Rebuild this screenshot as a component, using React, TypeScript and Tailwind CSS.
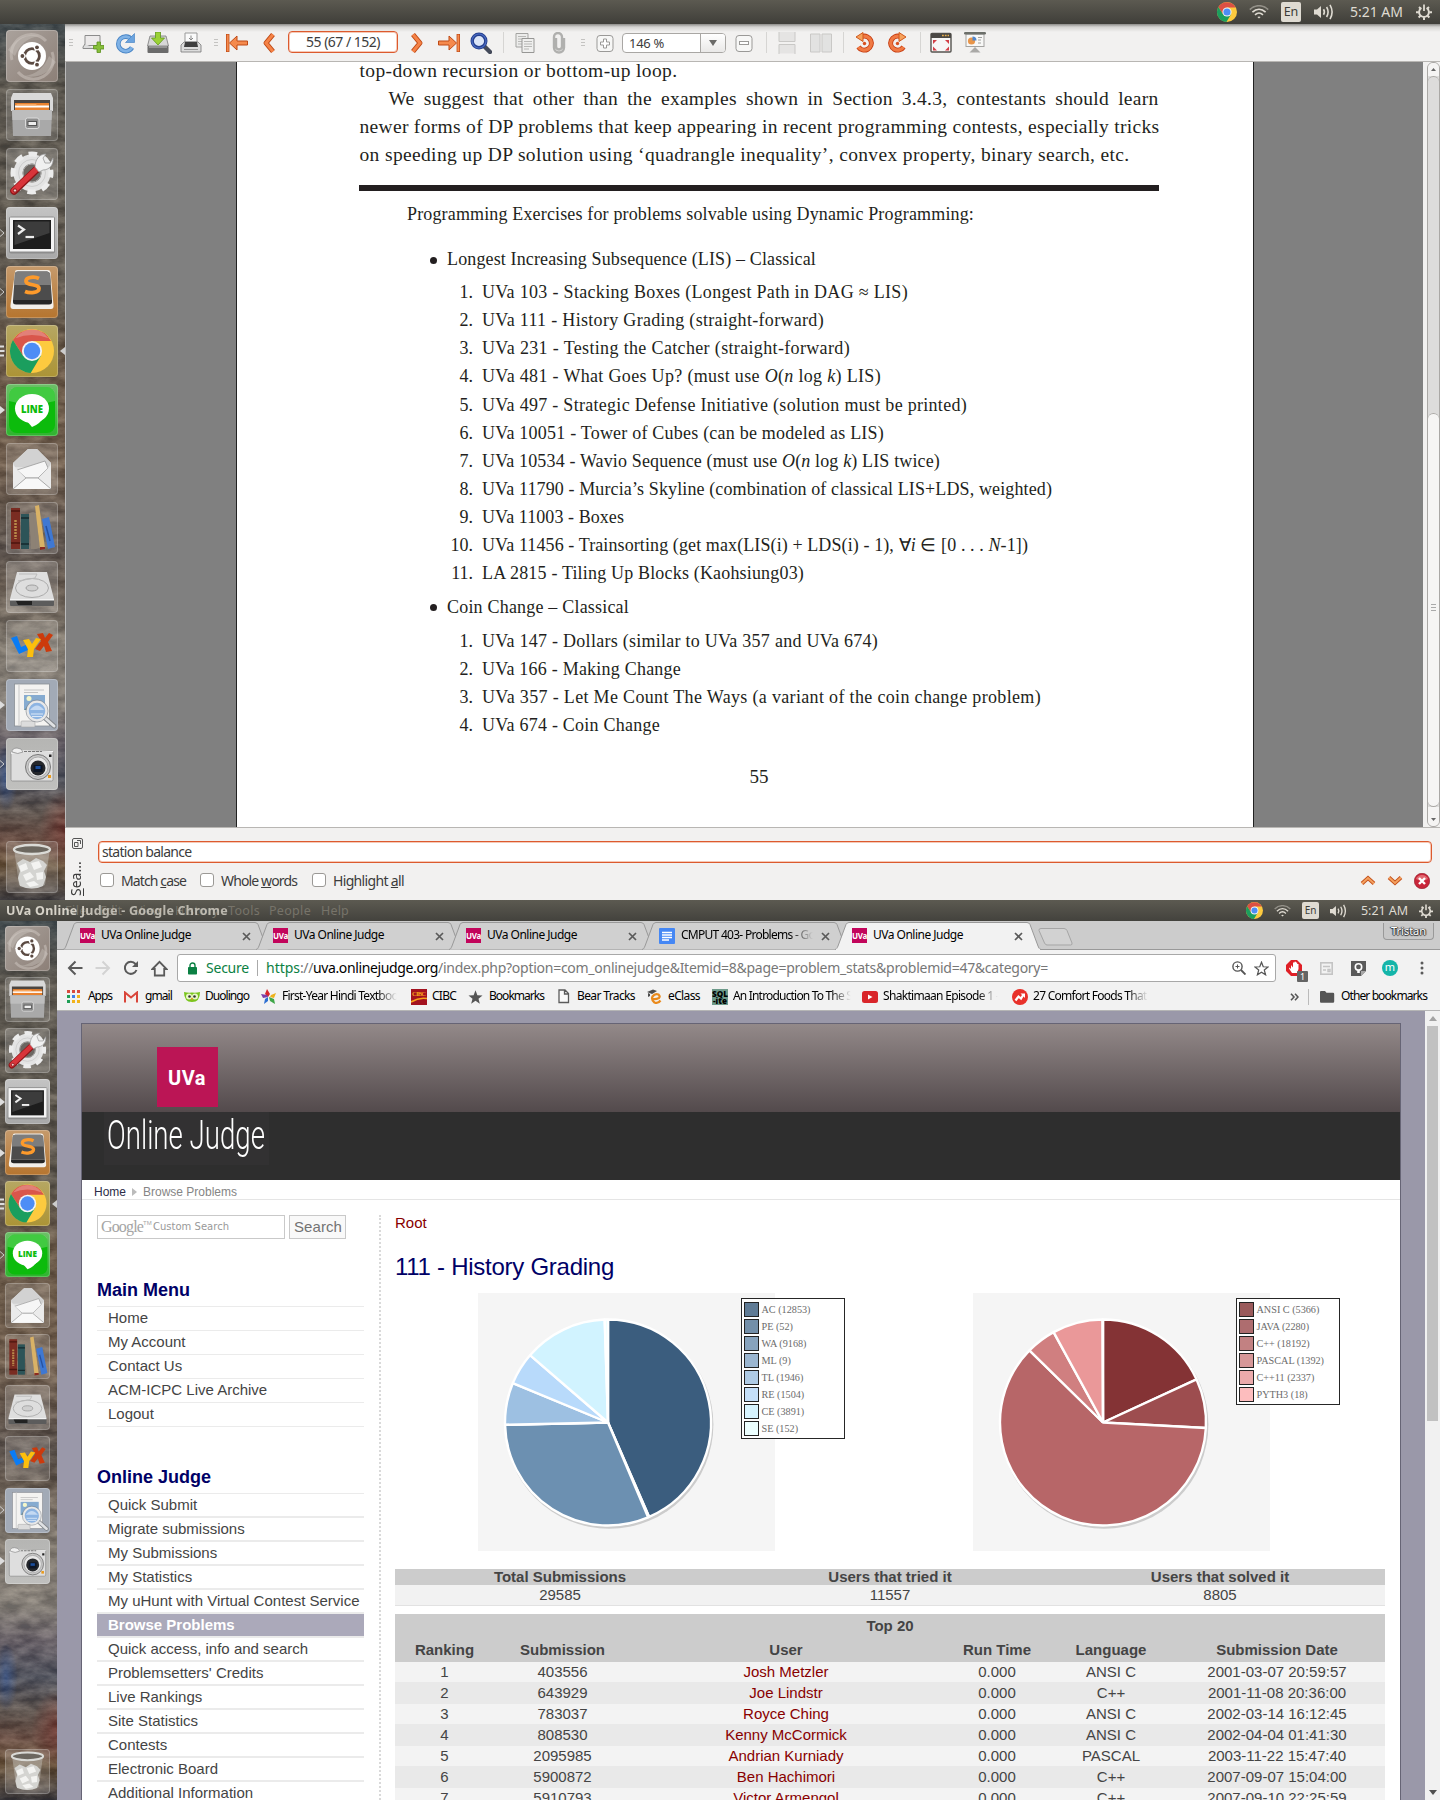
import React, { useLayoutEffect, useRef, useState } from "react";

type Kids = { children?: React.ReactNode };

/* Text that is tracked (or squeezed) to fill a given width. */
function Fit({ w, children, className = "", squeeze = false }: Kids & { w: number; className?: string; squeeze?: boolean }) {
  const ref = useRef<HTMLSpanElement>(null);
  const [v, setV] = useState<number | null>(null);
  useLayoutEffect(() => {
    const el = ref.current;
    if (!el || v !== null) return;
    const nat = el.getBoundingClientRect().width;
    const n = (el.textContent || "").length || 1;
    setV(squeeze ? w / nat : (w - nat) / n);
  }, [v, w, squeeze]);
  const style = v === null ? undefined : squeeze ? { transform: `scaleX(${v})` } : { letterSpacing: `${v}px` };
  return (
    <span ref={ref} style={style} className={"inline-block origin-left whitespace-pre " + className}>
      {children}
    </span>
  );
}

const UI = "font-['Noto_Sans',sans-serif]";

/* ---------- shared icons ---------- */
function Chrome({ className = "" }: { className?: string }) {
  return (
    <svg viewBox="0 0 24 24" className={className}>
      <circle cx="12" cy="12" r="12" fill="#fdca3f" />
      <path d="M1.61 6A12 12 0 0 1 22.39 6.5H12L7.2 14.75Z" fill="#dc5044" />
      <path d="M1.61 6A12 12 0 0 0 11.3 24L16.9 14.6L12 12L7.2 14.75Z" fill="#1b9e5e" />
      <circle cx="12" cy="12" r="5.5" fill="#f4f4f4" />
      <circle cx="12" cy="12" r="4.3" fill="#4d8df6" />
    </svg>
  );
}
function Wifi({ className = "" }: { className?: string }) {
  return (
    <svg viewBox="0 0 20 14" className={className} fill="none" stroke="#dfdbd2" strokeWidth="1.6">
      <path d="M0.8 4.6C6 -0.6 14 -0.6 19.2 4.6" opacity=".45" />
      <path d="M3.4 7.2C7.4 3.4 12.6 3.4 16.6 7.2" />
      <path d="M6 9.8C8.4 7.6 11.6 7.6 14 9.8" />
      <path d="M8.4 12L10 13.6L11.6 12C10.6 11.2 9.4 11.2 8.4 12Z" fill="#dfdbd2" stroke="none" />
    </svg>
  );
}
function Volume({ className = "" }: { className?: string }) {
  return (
    <svg viewBox="0 0 20 16" className={className} fill="none" stroke="#dfdbd2" strokeWidth="1.6">
      <path d="M0 5.5H3L7 2V14L3 10.5H0Z" fill="#dfdbd2" stroke="none" />
      <path d="M9.5 5.2Q11.3 8 9.5 10.8" />
      <path d="M12.6 3Q15.6 8 12.6 13" />
      <path d="M16 .8Q20.2 8 16 15.2" />
    </svg>
  );
}
function Gear({ className = "" }: { className?: string }) {
  return (
    <svg viewBox="0 0 16 16" className={className} fill="none" stroke="#dfdbd2">
      <path d="M5.4 3.9A4.9 4.9 0 1 0 10.6 3.9" strokeWidth="1.9" />
      <path d="M8 .5V7" strokeWidth="1.8" />
      <path d="M3 3L4.6 4.6M13 3L11.4 4.6M0 8.3H2.8M16 8.3H13.2M2.6 13.6L4.5 11.8M13.4 13.6L11.5 11.8M8 16V13.4" strokeWidth="2" />
    </svg>
  );
}

/* ---------- launcher ---------- */
function Art({ k }: { k: string }) {
  switch (k) {
    case "ubuntu":
      return (
        <g>
          <path d="M6 30A20 20 0 0 1 40 11M46 22A20 20 0 0 1 12 42" fill="none" stroke="#cfc8c2" strokeWidth="3" opacity=".5" />
          <path d="M2 20Q14 2 34 6Q16 8 9 26ZM50 32Q38 50 18 46Q36 44 43 26Z" fill="#d5cec8" opacity=".35" />
          <circle cx="26" cy="26" r="14" fill="#fff" />
          <circle cx="26" cy="26" r="7.4" fill="none" stroke="#5b4a42" strokeWidth="2.8" />
          <path d="M26 26L12 26M26 26L33 14M26 26L33 38" stroke="#fff" strokeWidth="1.2" />
          <circle cx="16.6" cy="26" r="3" fill="#fff" /><circle cx="30.8" cy="17.6" r="3" fill="#fff" /><circle cx="30.8" cy="34.4" r="3" fill="#fff" />
          <circle cx="16.4" cy="26" r="1.9" fill="#5b4a42" /><circle cx="31" cy="17.3" r="1.9" fill="#5b4a42" /><circle cx="31" cy="34.7" r="1.9" fill="#5b4a42" />
        </g>
      );
    case "files":
      return (
        <g>
          <path d="M7 4H45L47 9V22H5V9Z" fill="#d9d9d9" />
          <rect x="8" y="11" width="36" height="12" fill="#4a4541" />
          <path d="M9 14H43V21H9Z" fill="#e9822f" /><path d="M9 16.6H43V18.4H9Z" fill="#fff" /><path d="M11 15H30L31 16.2H10Z" fill="#f8a860" />
          <path d="M6 21H46L45 47H7Z" fill="#a9a9a9" /><path d="M6 21H46L45.6 31H6.4Z" fill="#bdbdbd" />
          <rect x="19.500" y="29" width="13.500" height="10.500" rx="2" fill="#8e8e8e" stroke="#dadada" /><rect x="22" y="32.500" width="8.500" height="4" fill="#eee" stroke="#555" />
        </g>
      );
    case "settings":
      return (
        <g>
          <circle cx="26" cy="25" r="14" fill="none" stroke="#e3e3e3" strokeWidth="9" />
          <circle cx="26" cy="25" r="19" fill="none" stroke="#ececec" strokeWidth="5" strokeDasharray="8.500 6.420" strokeDashoffset="4" />
          <circle cx="26" cy="25" r="13.500" fill="none" stroke="#cccccc" strokeWidth="1" /><circle cx="26" cy="25" r="9" fill="#6b6661" stroke="#aaa" />
          <path d="M8 43L31 21" stroke="#8d1518" strokeWidth="7.500" strokeLinecap="round" /><path d="M8 42.500L30.500 21" stroke="#d8343a" strokeWidth="5.500" strokeLinecap="round" />
          <circle cx="9" cy="42.500" r="1.700" fill="#f2d0d0" stroke="#8d1518" />
          <path d="M29 19C29 12 33 6 40 6L37 10L39 15L44 15L47 10C48 17 43 22 37 22L33 24Z" fill="#f0f0f0" stroke="#9a9a9a" strokeWidth=".8" />
        </g>
      );
    case "terminal":
      return (
        <g>
          <rect x="3" y="9.500" width="46" height="37" rx="2" fill="#8d8d8d" /><rect x="4" y="10.500" width="44" height="34" fill="#f4f4f4" />
          <rect x="7" y="13" width="38" height="29" fill="#1d1d1d" /><path d="M8.500 14.500H43.500V26L8.500 38Z" fill="#4a4a4a" opacity=".7" />
          <path d="M12 18.500L18 22.500L12 27" fill="none" stroke="#eee" strokeWidth="2.200" /><path d="M19.500 30H28" stroke="#eee" strokeWidth="2.200" />
        </g>
      );
    case "sublime":
      return (
        <g>
          <path d="M9 6Q9 4 11 4H42Q44 4 44.500 6L47.500 39Q48 43 45 43H7Q4 43 4.500 39Z" fill="#f2efea" />
          <path d="M9 8Q9 5.500 12 5.500H41Q43.500 5.500 44 8L46 34H7Z" fill="#4c4c4c" /><path d="M9 8Q9 5.500 12 5.500H41Q43.500 5.500 44 8L45 19H8Z" fill="#7d7d7d" />
          <path d="M7 34H46V36Q46 38.500 43 38.500H10Q7 38.500 7 36Z" fill="#262626" />
          <path d="M33 12.500C29 10.500 20 10.500 20 15C20 20 33 17.500 33 22.500C33 27 24 27.500 19 25.500" fill="none" stroke="#fd9a2b" strokeWidth="3.800" />
        </g>
      );
    case "chrome":
      return (
        <g transform="translate(4 4) scale(1.833)">
          <circle cx="12" cy="12" r="12" fill="#fdca3f" />
          <path d="M1.61 6A12 12 0 0 1 22.39 6.5H12L7.2 14.750Z" fill="#d9564b" />
          <path d="M1.61 6A12 12 0 0 0 11.3 24L16.9 14.600L12 12L7.2 14.750Z" fill="#1b9e5e" />
          <path d="M3 5A11 11 0 0 1 21 5Q12 1.500 3 5Z" fill="#fff" opacity=".25" />
          <circle cx="12" cy="12" r="5.500" fill="#f4f4f4" /><circle cx="12" cy="12" r="4.500" fill="#4d8df6" />
        </g>
      );
    case "line":
      return (
        <g>
          <rect x="3" y="3" width="46" height="46" rx="8" fill="#0cbb0c" />
          <path d="M3 11Q3 3 11 3H41Q49 3 49 11V17Q26 24 3 17Z" fill="#fff" opacity=".22" />
          <ellipse cx="26" cy="24.500" rx="17" ry="14.500" fill="#fff" /><path d="M20 36L26 43Q34 40 38 33Z" fill="#fff" />
          <text x="26" y="28.500" textAnchor="middle" textLength="22" lengthAdjust="spacingAndGlyphs" fontFamily="Open Sans" fontWeight="800" fontSize="11" fill="#0cbb0c">LINE</text>
        </g>
      );
    case "mail":
      return (
        <g>
          <path d="M7 20L22 6H31L45 20V46H7Z" fill="#e2e2e2" /><path d="M7 20L22 6H31L45 20L43 24L9 24Z" fill="#d2d2d2" />
          <path d="M11 27L39 18L42 25L32 35H20Z" fill="#f6f6f6" stroke="#999" strokeWidth=".8" />
          <path d="M7 22L20 35.500H32L45 22V46H7Z" fill="#ececec" opacity=".85" /><path d="M7 46L20 35H32L45 46" fill="#f8f8f8" stroke="#aaa" />
        </g>
      );
    case "books":
      return (
        <g>
          <rect x="5" y="6" width="9" height="41" fill="#7a2c22" /><path d="M5 9H14M5 41H14" stroke="#4c140f" strokeWidth="1.500" /><path d="M9.500 18V37" stroke="#b98a4a" strokeWidth="2.500" strokeDasharray="2 1" />
          <rect x="15" y="12" width="8" height="35" fill="#2d5458" /><path d="M15 16H23M15 42H23" stroke="#15292c" strokeWidth="1.500" />
          <path d="M23 11L27 10L30 47H25ZM27 10L30 11L34 46L30 47Z" fill="#8d8275" />
          <path d="M29 4L33 3L39 46L34 47Z" fill="#d9b266" /><path d="M34 45L39 45L39 47L34 48Z" fill="#8c2a20" />
          <path d="M36 17L43 15L49 45L42 47Z" fill="#3f78d2" /><path d="M40 24L44 39" stroke="#2651a0" strokeWidth="1.500" />
        </g>
      );
    case "disk":
      return (
        <g>
          <path d="M11 11H41L48 38H4Z" fill="#dedede" /><path d="M4 38H48V44Q48 45 47 45H5Q4 45 4 44Z" fill="#5c5c5c" /><path d="M4 38H48V39.500H4Z" fill="#f3f3f3" /><path d="M10 40H26V44H12Z" fill="#222" />
          <ellipse cx="26" cy="27" rx="16.500" ry="9.500" fill="none" stroke="#ababab" /><ellipse cx="26" cy="27" rx="6" ry="3" fill="#d0d0d0" stroke="#a0a0a0" />
          <path d="M13 13H31L29 17L12 20" fill="none" stroke="#bbb" />
        </g>
      );
    case "lyx":
      return (
        <g>
          <path d="M5 18L11 16L15 27L20 25L22 30L13 34Z" fill="#0a7cf5" />
          <path d="M31 14L37 13L39 18L43 13L47 15L42 22L46 31L40 32L38 26L34 31L29 29L35 21Z" fill="#cc3a0c" />
          <path d="M17 20L23 19L26 24L30 18L35 19L28 29L27 37L21 37L22 29Z" fill="#fdbf0c" />
        </g>
      );
    case "evince":
      return (
        <g>
          <rect x="8.500" y="5" width="35" height="42" fill="#f4f3f1" stroke="#8b8f96" strokeWidth=".8" /><path d="M13 5V47" stroke="#c9c9c9" />
          <path d="M18 11H38M18 13.500H32" stroke="#c4c4c4" /><rect x="18" y="16" width="21" height="15" fill="#86abd0" /><circle cx="23" cy="19.500" r="2.500" fill="#f4f6c8" /><path d="M18 31L26 23L32 31Z" fill="#6c8f94" />
          <rect x="15" y="42" width="14" height="6" rx="1" fill="#dcdcdc" stroke="#aaa" strokeWidth=".6" />
          <path d="M39 39L48 47" stroke="#83878c" strokeWidth="5" strokeLinecap="round" /><path d="M39 39L48 47" stroke="#dfe1e3" strokeWidth="3" strokeLinecap="round" />
          <circle cx="31" cy="32" r="9.500" fill="#8db4e2" stroke="#e8e8e8" strokeWidth="2.500" /><circle cx="31" cy="32" r="11" fill="none" stroke="#7c828a" strokeWidth=".6" />
          <path d="M24 31Q31 22 38 31Z" fill="#c4d9f2" /><path d="M25 35H37M26 37.500H36" stroke="#dbe8f7" />
        </g>
      );
    case "camera":
      return (
        <g>
          <rect x="5" y="13" width="42" height="30" rx="1.500" fill="#dedede" stroke="#8d8d8d" strokeWidth=".8" /><path d="M5 16Q20 12 47 14V13L6 12Z" fill="#f7f7f7" />
          <path d="M6 14Q6 10 11 10Q16 10 17 14Q12 17 6 14Z" fill="#efefef" stroke="#8d8d8d" strokeWidth=".8" /><path d="M18 13.500H36" stroke="#777" strokeWidth="1.200" strokeDasharray="3 1" />
          <circle cx="32" cy="29" r="12.500" fill="#c8c8c8" stroke="#777" /><circle cx="32" cy="29" r="10" fill="#e8e8e8" stroke="#999" strokeWidth=".7" /><circle cx="32" cy="30" r="7.500" fill="#25272b" />
          <rect x="27.500" y="27" width="9" height="7" fill="#0d1524" /><rect x="29.500" y="28" width="5" height="3" fill="#1b4e9c" /><rect x="43" y="16.500" width="2.500" height="2.500" fill="#222" /><rect x="42" y="37" width="3" height="3" fill="#e89a1c" />
        </g>
      );
    default:
      return (
        <g>
          <path d="M8 7L13 44Q26 51 39 44L44 7Z" fill="#cfcfca" opacity=".4" />
          <ellipse cx="26" cy="8.500" rx="18" ry="4.500" fill="#6c675f" stroke="#dadad6" strokeWidth="2.400" />
          <path d="M11 22L17 18L24 21L30 17L37 20L41 24L38 30L40 36L37 45Q26 50 14 45L12 37L14 30Z" fill="#d4d4d1" />
          <path d="M13 25L20 22L22 28L15 31ZM25 22L33 20L36 26L28 29ZM17 34L24 31L28 36L20 40ZM30 32L37 31L37 38L31 39ZM20 42L28 40L33 44L24 46Z" fill="#f3f3f1" />
        </g>
      );
  }
}

const wallpaper =
  "bg-[radial-gradient(ellipse_12px_34px_at_6px_86%,#2f4f8c,transparent),radial-gradient(ellipse_26px_40px_at_100%_92%,#7a3a34,transparent),linear-gradient(180deg,#36444c_0%,#5a5750_7%,#5f5950_30%,#6b5845_38%,#776250_50%,#5d5450_60%,#665a50_64%,#8a8379_70%,#928d87_78%,#655f6c_82%,#4d5364_86%,#605652_90%,#6a4a40_93%,#6a5136_96%,#3d3c42_100%)]";

const tileBg: Record<string, string> = {
  ubuntu: "bg-[linear-gradient(135deg,#aaa29c,#8c7f77)]",
  files: "bg-white/15",
  settings: "bg-white/20",
  terminal: "bg-[linear-gradient(180deg,#c4c4c4,#a8a8a8)]",
  sublime: "bg-[linear-gradient(180deg,#c59a6c,#b6752f)]",
  chrome: "bg-[linear-gradient(180deg,#b6a763,#ac9436)]",
  line: "bg-[linear-gradient(180deg,#6dbf68,#2fb42f)]",
  mail: "bg-white/15",
  books: "bg-white/15",
  disk: "bg-white/20",
  lyx: "bg-white/15",
  evince: "bg-[#a2aab6]",
  camera: "bg-[linear-gradient(180deg,#b5b5b3,#c0c0be)]",
  trash: "bg-white/15",
};

function Pip({ kind }: { kind: string }) {
  return (
    <svg viewBox="0 0 5 12" className="absolute top-1/2 -translate-y-1/2 left-0 w-[5px] h-3">
      {kind === "solid" && <path d="M0 2L5 6L0 10Z" fill="#ddd" />}
      {kind === "open" && <path d="M0 2.500L4 6L0 9.500" fill="none" stroke="#ccc" />}
      {kind === "bars" && <path d="M0 1.500H4M0 6H4.500M0 10.500H4" stroke="#ddd" strokeWidth="2" />}
    </svg>
  );
}

function Launcher({ small = false, pips }: { small?: boolean; pips: Record<string, string> }) {
  const names = ["ubuntu", "files", "settings", "terminal", "sublime", "chrome", "line", "mail", "books", "disk", "lyx", "evince", "camera"];
  const cell = (n: string) => (
    <div key={n} className={"relative shrink-0 flex " + (small ? "h-[51.05px] pl-[5px]" : "h-[59px] pl-1.5")}>
      <div className={"relative rounded-[4px] shadow-[inset_0_0_0_1px_rgba(255,255,255,.22)] " + (small ? "size-[45px] " : "size-[52px] ") + tileBg[n]}>
        <svg viewBox="0 0 52 52" className="block size-full"><Art k={n} /></svg>
        {pips[n] && <div className={"absolute inset-y-0 " + (small ? "-left-[5px]" : "-left-1.5")}><Pip kind={pips[n]} /></div>}
        {n === "chrome" && (
          <svg viewBox="0 0 5 8" className="absolute top-1/2 -translate-y-1/2 w-[5px] h-2 -right-[7px]"><path d="M5 0L0 4L5 8Z" fill="#ccc" /></svg>
        )}
      </div>
    </div>
  );
  return (
    <div className={"relative shrink-0 overflow-hidden flex flex-col " + wallpaper + (small ? " w-[57px] pt-[5px]" : " w-[65px] pt-1.5")}>
      <svg className="absolute inset-0 size-full" aria-hidden="true">
        <filter id={small ? "grainB" : "grainA"} x="0" y="0" width="100%" height="100%" colorInterpolationFilters="sRGB">
          <feTurbulence type="fractalNoise" baseFrequency="0.05 0.11" numOctaves="5" seed="7" />
          <feColorMatrix values="1.3 0 0 0 -.27  1.25 0 0 0 -.28  1.15 0 0 0 -.27  0 0 0 0 .26" />
        </filter>
        <rect width="100%" height="100%" filter={small ? "url(#grainB)" : "url(#grainA)"} />
      </svg>
      {names.map(cell)}
      <div className={small ? "h-[161px]" : "h-[45px]"} />
      {cell("trash")}
    </div>
  );
}

/* ---------- PDF viewer ---------- */
const Grip = () => (
  <div className="flex flex-col gap-[2px]">
    <i className="block w-1 h-px bg-[#c4c3c1]" /><i className="block w-1 h-px bg-[#c4c3c1]" /><i className="block w-1 h-px bg-[#c4c3c1]" />
  </div>
);
const Sep = () => <div className="w-px h-[21px] bg-[#d6d5d3]" />;
const I = ({ children, w = 22 }: Kids & { w?: number }) => (
  <svg width={w} height="22" viewBox={`0 0 ${w} 22`} className="max-w-none">{children}</svg>
);

function PdfToolbar() {
  return (
    <div className="relative h-[38px] shrink-0 bg-[linear-gradient(180deg,#8b8a87_0,#d4d3d1_3px,#f2f1f0_8px)] border-b border-[#b8b6b3] grid items-center justify-items-center grid-cols-[12px_32px_32px_34px_32px_18px_24px_39px_110px_38px_25px_40px_5px_38px_29px_20px_24px_114px_26px_18px_24px_43px_2px_42px_22px_24px_18px_50px]">
      <Grip />
      <I><path d="M3 3.500H18V13.500H3Z" fill="#eceaea" stroke="#8c8c8c" /><path d="M3 12L1 15V16.500H13" fill="#ddd" stroke="#8c8c8c" /><path d="M15 10H18.500V13.500H22V17H18.500V20.500H15V17H11.500V13.500H15Z" fill="#86bf3a" stroke="#5c8f1d" strokeWidth=".8" /></I>
      <I><path d="M17.500 7.500A7.300 7.300 0 1 0 18 15.500" fill="none" stroke="#4b86c6" strokeWidth="4.600" /><path d="M17.500 7.500A7.300 7.300 0 1 0 18 15.500" fill="none" stroke="#7fb2e6" strokeWidth="2.800" /><path d="M20.500 1.500V10.500H11.500Z" fill="#6ba3de" stroke="#4b86c6" strokeWidth=".7" /></I>
      <I><path d="M3 4H19L21.500 14H.5Z" fill="#d7d7d7" stroke="#777" strokeWidth=".8" /><rect x=".5" y="14" width="21" height="7" rx="1" fill="#6b6b6b" /><path d="M2 15H20" stroke="#bbb" /><path d="M8.500 0H13.500V6H17.500L11 13L4.500 6H8.500Z" fill="#9bd236" stroke="#5f971d" strokeWidth=".8" /></I>
      <I><path d="M5 1H17V10H5Z" fill="#fafafa" stroke="#999" /><path d="M11 3.500V8M9 6L11 8L13 6" stroke="#888" fill="none" /><path d="M4 10H18L21 13V20H1V13Z" fill="#dcdcdc" stroke="#777" strokeWidth=".8" /><path d="M5 10H17L18 15H4Z" fill="#3e3e3e" /><path d="M4 17.500H18" stroke="#999" /></I>
      <Grip />
      <I><path d="M1.700 2V20" stroke="#bf4a16" strokeWidth="3.400" /><path d="M1.700 2.600V19.400" stroke="#f58a4d" strokeWidth="1.900" /><path d="M3.500 11L11 4V9H21.500V13H11V18Z" fill="#f58a4d" stroke="#bf4a16" /></I>
      <I w={14}><path d="M11 2.500L4 11L11 19.500" fill="none" stroke="#bf4a16" strokeWidth="5" strokeLinejoin="round" /><path d="M11 2.500L4 11L11 19.500" fill="none" stroke="#f58347" strokeWidth="3" /></I>
      <div className="w-[110px] h-[22px] mt-[-1px] rounded-[4px] border border-[#dc5a2e] bg-white shadow-[inset_0_0_0_1px_#f6c9b7] flex items-center pl-[17px] text-[14px] leading-5 text-[#3c3c3c]"><Fit w={74}>55 (67 / 152)</Fit></div>
      <I w={14}><path d="M3 2.500L10 11L3 19.500" fill="none" stroke="#bf4a16" strokeWidth="5" strokeLinejoin="round" /><path d="M3 2.500L10 11L3 19.500" fill="none" stroke="#f58347" strokeWidth="3" /></I>
      <I><path d="M20.300 2V20" stroke="#bf4a16" strokeWidth="3.400" /><path d="M20.300 2.600V19.400" stroke="#f58a4d" strokeWidth="1.900" /><path d="M18.500 11L11 4V9H.5V13H11V18Z" fill="#f58a4d" stroke="#bf4a16" /></I>
      <I><path d="M14 14L20 20" stroke="#444a5a" strokeWidth="4.400" strokeLinecap="round" /><circle cx="9" cy="9" r="6.800" fill="#dbe5f8" stroke="#26408f" strokeWidth="3.400" /><circle cx="9" cy="9" r="7" fill="none" stroke="#4a6cc4" strokeWidth="1.200" /></I>
      <Sep />
      <I><path d="M2 1.500H14V15H2Z" fill="#ececeb" stroke="#a3a3a1" /><path d="M4 4.500H12M4 7H12M4 9.500H8M4 12H8" stroke="#b8b8b6" /><path d="M8 6.500H20V20.500H8Z" fill="#efefee" stroke="#979795" /><path d="M10 9.500H18M10 12H18M10 14.500H18M10 17H15" stroke="#b8b8b6" /></I>
      <I w={14}><path d="M4 6V14.500A3 3 0 0 0 10 14.500V5A4 4 0 0 0 2 5V15.500A5 5 0 0 0 12 15.500V6" fill="none" stroke="#b0b0ae" strokeWidth="2.400" /></I>
      <Grip />
      <I w={18}><rect x="1" y="3.500" width="16" height="16" rx="3" fill="#f7f7f6" stroke="#9a9997" /><path d="M7.500 7H10.500V10H13.500V13H10.500V16H7.500V13H4.500V10H7.500Z" fill="#fff" stroke="#9a9997" /></I>
      <div className="flex w-[104px] h-5 rounded-[4px] border border-[#a9a7a4] bg-white text-[13px] text-[#3c3c3c] leading-[19px] overflow-hidden">
        <div className="w-[78px] pl-1.5 border-r border-[#a9a7a4]"><Fit w={35}>146 %</Fit></div>
        <div className="flex-1 bg-[linear-gradient(180deg,#fff,#e9e8e7)] flex items-center justify-center"><svg width="8" height="6"><path d="M0 0H8L4 6Z" fill="#6b6a68" /></svg></div>
      </div>
      <I w={18}><rect x="1" y="3.500" width="16" height="16" rx="3" fill="#f7f7f6" stroke="#9a9997" /><rect x="4.500" y="9.500" width="9" height="3" fill="#fff" stroke="#9a9997" /></I>
      <Sep />
      <I w={18}><path d="M1 0V9H17V0ZM1 21.500V12H17V21.500Z" fill="#e5e4e3" /><path d="M1 0V9.500H17V0M1 22V12.500H17V22" fill="none" stroke="#c9c8c6" /></I>
      <I><path d="M.5 2H10V20H.5ZM12 2H21.500V20H12Z" fill="#e2e2e1" stroke="#c9c8c6" /></I>
      <Sep />
      <I><path d="M8 4.500A7 7 0 1 1 4.500 15" fill="none" stroke="#c63c10" strokeWidth="5" /><path d="M8 4.500A7 7 0 1 1 4.500 15" fill="none" stroke="#f07a44" strokeWidth="3.200" /><path d="M2 5L9 .5V9.500Z" fill="#f6a25c" stroke="#d0581c" /><circle cx="10.500" cy="11.500" r="1.700" fill="#d8501f" /></I>
      <I><path d="M14 4.500A7 7 0 1 0 17.500 15" fill="none" stroke="#c63c10" strokeWidth="5" /><path d="M14 4.500A7 7 0 1 0 17.500 15" fill="none" stroke="#f07a44" strokeWidth="3.200" /><path d="M20 5L13 .5V9.500Z" fill="#f6a25c" stroke="#d0581c" /><circle cx="11.500" cy="11.500" r="1.700" fill="#d8501f" /></I>
      <Sep />
      <I><rect x="1" y="1.500" width="20" height="18.500" rx="1" fill="#f7f7f7" stroke="#55534f" strokeWidth="1.400" /><rect x="1" y="1.500" width="20" height="4.500" fill="#4a4845" /><path d="M12 3.500H19" stroke="#eab04c" strokeWidth="1.600" strokeDasharray="1.800 1" /><path d="M3 8H7L3 12ZM19 8H15L19 12ZM3 18.500H7L3 14.500ZM19 18.500H15L19 14.500Z" fill="#d23f47" /></I>
      <I><rect x="2" y="2" width="18" height="12.500" fill="#f8f8f7" stroke="#a4a3a1" /><rect x="0" y="0" width="22" height="2.600" rx="1.300" fill="#6c6f6a" /><circle cx="7.500" cy="9" r="3.600" fill="#e8954a" /><path d="M8.500 8.500V4.500A4 4 0 0 1 12.500 8.500Z" fill="#4f86cc" /><path d="M14 5.500H18M14 8H17M14 11H17" stroke="#a0a09e" /><path d="M11 15L5.500 20.500H16.500Z" fill="#aaa9a7" /></I>
    </div>
  );
}

function Ln({ ind = "", w, children, size = "text-[18px]" }: Kids & { ind?: string; w: number; size?: string }) {
  return <div className={"h-7 leading-7 whitespace-pre " + size + " " + ind}><Fit w={w}>{children}</Fit></div>;
}
function Item({ n, w, children }: Kids & { n: number; w: number }) {
  return (
    <div className="flex h-[28.13px] leading-7 text-[18px]">
      <div className="w-[245px] text-right pr-[9px]">{n}.</div>
      <Fit w={w}>{children}</Fit>
    </div>
  );
}
const Onlogk = () => <><i>O</i>(<i>n</i> log <i>k</i>)</>;

function PdfPage() {
  return (
    <div className="w-[1018px] shrink-0 bg-white border-x border-[#222] overflow-hidden text-[#231f20] font-['Liberation_Serif',serif]">
      <div className="-mt-[5px] pl-[122.500px]">
        <Ln size="text-[19.500px]" w={318}>top-down recursion or bottom-up loop.</Ln>
        <Ln size="text-[19.500px] [word-spacing:4px]" ind="pl-[29px]" w={770}>We suggest that other than the examples shown in Section 3.4.3, contestants should learn</Ln>
        <Ln size="text-[19.500px]" w={800}>newer forms of DP problems that keep appearing in recent programming contests, especially tricks</Ln>
        <Ln size="text-[19.500px]" w={770}>on speeding up DP solution using ‘quadrangle inequality’, convex property, binary search, etc.</Ln>
      </div>
      <div className="mt-4 ml-[122px] w-[800px] h-1.5 bg-[#231f20]" />
      <div className="mt-[9px]"><Ln ind="pl-[170px]" w={567}>Programming Exercises for problems solvable using Dynamic Programming:</Ln></div>
      <div className="mt-[17px] flex items-center pl-[193px]"><i className="block size-[7px] rounded-full bg-[#231f20] mr-[10px] mt-[2px]" /><Ln w={369}>Longest Increasing Subsequence (LIS) – Classical</Ln></div>
      <div className="mt-[5px]">
        <Item n={1} w={426}>UVa 103 - Stacking Boxes (Longest Path in DAG ≈ LIS)</Item>
        <Item n={2} w={342}>UVa 111 - History Grading (straight-forward)</Item>
        <Item n={3} w={368}>UVa 231 - Testing the Catcher (straight-forward)</Item>
        <Item n={4} w={399}>UVa 481 - What Goes Up? (must use <Onlogk /> LIS)</Item>
        <Item n={5} w={485}>UVa 497 - Strategic Defense Initiative (solution must be printed)</Item>
        <Item n={6} w={402}>UVa 10051 - Tower of Cubes (can be modeled as LIS)</Item>
        <Item n={7} w={458}>UVa 10534 - Wavio Sequence (must use <Onlogk /> LIS twice)</Item>
        <Item n={8} w={570}>UVa 11790 - Murcia’s Skyline (combination of classical LIS+LDS, weighted)</Item>
        <Item n={9} w={142}>UVa 11003 - Boxes</Item>
        <Item n={10} w={546}>UVa 11456 - Trainsorting (get max(LIS(i) + LDS(i) - 1), ∀<i>i</i> ∈ [0 . . . <i>N</i>-1])</Item>
        <Item n={11} w={322}>LA 2815 - Tiling Up Blocks (Kaohsiung03)</Item>
      </div>
      <div className="mt-[5.600px] flex items-center pl-[193px]"><i className="block size-[7px] rounded-full bg-[#231f20] mr-[10px] mt-[2px]" /><Ln w={182}>Coin Change – Classical</Ln></div>
      <div className="mt-[6px]">
        <Item n={1} w={396}>UVa 147 - Dollars (similar to UVa 357 and UVa 674)</Item>
        <Item n={2} w={199}>UVa 166 - Making Change</Item>
        <Item n={3} w={559}>UVa 357 - Let Me Count The Ways (a variant of the coin change problem)</Item>
        <Item n={4} w={178}>UVa 674 - Coin Change</Item>
      </div>
      <div className="mt-[24px] pl-[512.500px]"><Ln w={19} size="text-[19px]">55</Ln></div>
    </div>
  );
}

function Check({ children, w, className = "" }: Kids & { w: number; className?: string }) {
  return (
    <div className={"flex items-center " + className}>
      <i className="block size-[14px] rounded-[3px] border border-[#9b9996] bg-white mr-[7px] -mt-[2px]" />
      <Fit w={w}>{children}</Fit>
    </div>
  );
}

function FindBar() {
  return (
    <div className="h-[73px] shrink-0 flex bg-[#f2f1f0] border-t border-[#b8b6b3] text-[#3c3c3c] text-[14px]">
      <div className="w-[33px] relative">
        <svg width="11" height="11" className="absolute left-[7px] top-[10px]" fill="none" stroke="#555"><rect x=".5" y=".5" width="10" height="10" rx="1.500" /><path d="M5 2.500H8.500V6M2.500 4.500H6V8.500H2.500Z" /></svg>
        <div className="absolute left-[2px] top-[33px] h-[35px] w-[18px] [writing-mode:vertical-rl] rotate-180 leading-[18px]"><u>S</u>ea...</div>
      </div>
      <div className="flex-1 pt-[13px] pr-2">
        <div className="h-[22px] rounded-[4px] border border-[#dc5a2e] bg-white shadow-[inset_0_0_0_1px_#f6c9b7] pl-[3px] leading-[20px] text-[14px]"><Fit w={89.5}>station balance</Fit></div>
        <div className="flex items-center pl-0.5 h-[35px]">
          <Check w={65}>Match <u>c</u>ase</Check>
          <Check w={76} className="ml-[14px]">Whole <u>w</u>ords</Check>
          <Check w={71} className="ml-[15px]">Highlight <u>a</u>ll</Check>
          <div className="ml-auto mr-[2px] flex items-center gap-[11px]">
            <svg width="16" height="11"><path d="M2 8.500L8 3L14 8.500" fill="none" stroke="#c4501a" strokeWidth="3.800" /><path d="M2 8.500L8 3L14 8.500" fill="none" stroke="#f4a15f" strokeWidth="2" /></svg>
            <svg width="16" height="11"><path d="M2 2.500L8 8L14 2.500" fill="none" stroke="#c4501a" strokeWidth="3.800" /><path d="M2 2.500L8 8L14 2.500" fill="none" stroke="#f4a15f" strokeWidth="2" /></svg>
            <svg width="16" height="16"><circle cx="8" cy="8" r="7.700" fill="#c9263a" stroke="#8e1624" strokeWidth=".6" /><path d="M2 6A6.500 6.500 0 0 1 14 6Q8 9 2 6Z" fill="#e77a80" opacity=".8" /><path d="M5 5L11 11M11 5L5 11" stroke="#fff" strokeWidth="2.400" /></svg>
          </div>
        </div>
      </div>
    </div>
  );
}

function TopWindow() {
  return (
    <div className="h-[900px] flex flex-col overflow-hidden">
      <div className="h-6 shrink-0 bg-[linear-gradient(180deg,#5c5a51,#3f3e39)] flex items-center justify-end pr-2">
        <Chrome className="size-5" />
        <Wifi className="w-5 h-[14px] ml-3" />
        <div className="ml-3 w-5 h-5 rounded-[2px] bg-[#dfdbd2] text-[#3c3b37] text-[12.500px] leading-5 text-center">En</div>
        <Volume className="w-5 h-4 ml-[13px]" />
        <div className="ml-4 text-[14px] leading-6 text-[#dfdbd2]"><Fit w={53}>5:21 AM</Fit></div>
        <Gear className="size-4 ml-[13px]" />
      </div>
      <div className="flex-1 min-h-0 flex">
        <Launcher pips={{ terminal: "open", sublime: "open", chrome: "bars", line: "solid", evince: "solid", camera: "open" }} />
        <div className="flex-1 flex flex-col min-w-0">
          <PdfToolbar />
          <div className="flex flex-1 min-h-0 bg-[#f2f1f0]">
            <div className="w-px bg-[#bbb]" />
            <div className="w-[170px] bg-[#808080]" />
            <PdfPage />
            <div className="w-[169px] bg-[#808080]" />
            <div className="flex-1 pl-1">
              <div className="h-full w-[13px] rounded-[6px] border border-[#aaa8a5] bg-[#dddcdb] flex flex-col overflow-hidden">
                <div className="h-[13px] bg-[#f5f4f3] flex items-center justify-center"><svg width="5" height="3"><path d="M0 3H5L2.500 0Z" fill="#666" /></svg></div>
                <div className="h-[337px] rounded-t-[6px] border-t border-[#aaa8a5]" />
                <div className="h-[394px] rounded-[6px] border-y border-[#aaa8a5] bg-[#f6f5f4] flex flex-col items-center justify-center gap-[2px] pb-1.5"><i className="block w-[5px] h-px bg-[#aaa]" /><i className="block w-[5px] h-px bg-[#aaa]" /><i className="block w-[5px] h-px bg-[#aaa]" /></div>
                <div className="flex-1 bg-[#f5f4f3] flex items-center justify-center pt-1.5"><svg width="5" height="3"><path d="M0 0H5L2.500 3Z" fill="#666" /></svg></div>
              </div>
            </div>
          </div>
          <FindBar />
        </div>
      </div>
    </div>
  );
}

/* ---------- browser ---------- */
const Fav = () => <div className="w-[15px] h-[15px] bg-[#c2055b] text-white font-bold text-[8px] leading-[15px] overflow-hidden"><Fit w={15}>UVa</Fit></div>;

function Tab({ active = false, title, w, doc = false }: { active?: boolean; title: string; w: number; doc?: boolean }) {
  return (
    <div className={"relative w-[206px] h-[29px] shrink-0 -mr-[13px] " + (active ? "z-10" : "")}>
      <svg className="absolute inset-0" width="206" height="29">
        <path d="M0 28.500C2 28 2 27 3 25L11 3.500Q12 1.500 14 1.500H192Q194 1.500 195 3.500L203 25Q204 28.500 206 28.500" fill={active ? "#f2f2f2" : "#d0d0d0"} stroke="#999" />
        {active && <path d="M1 28.500H205" stroke="#f2f2f2" strokeWidth="1.400" />}
      </svg>
      <div className="relative flex items-center h-full pl-[17px] pr-[18px]">
        {doc ? <svg width="16" height="16"><rect width="16" height="16" rx="1" fill="#4587f4" /><path d="M3 4.500H13M3 7H13M3 9.500H13M3 12H10" stroke="#fff" strokeWidth="1.300" /></svg> : <Fav />}
        <div className={"ml-[6px] text-[12px] leading-4 -mt-[2px] text-black " + (doc ? "w-[132px] overflow-hidden [mask-image:linear-gradient(90deg,#000_82%,transparent)]" : "w-[132px]")}><Fit w={w}>{title}</Fit></div>
        <svg width="9" height="9" className="ml-auto mt-px"><path d="M1 1L8 8M8 1L1 8" stroke="#5a5a5a" strokeWidth="1.700" /></svg>
      </div>
    </div>
  );
}

function Bm({ icon, text, w, box, fade = false }: { icon: React.ReactNode; text: string; w: number; box: string; fade?: boolean }) {
  return (
    <div className={"flex items-center shrink-0 " + box}>
      <div className="w-[21px] shrink-0 flex">{icon}</div>
      <div className={"-mt-px " + (fade ? "[mask-image:linear-gradient(90deg,#000_82%,transparent_99%)]" : "")}><Fit w={w}>{text}</Fit></div>
    </div>
  );
}

function BrowserBars() {
  return (
    <div className={"shrink-0 " + UI}>
      <div className="h-[29px] bg-[#ccc] shadow-[inset_0_-1px_0_#999] flex pl-[6px] relative">
        <Tab title="UVa Online Judge" w={90} />
        <Tab title="UVa Online Judge" w={90} />
        <Tab title="UVa Online Judge" w={90} />
        <Tab title="CMPUT 403- Problems - Go" w={134} doc />
        <Tab title="UVa Online Judge" w={90} active />
        <svg width="36" height="18" className="ml-[10px] mt-[7px]"><path d="M3 .5H26Q28 .5 29 2.500L34 15Q34.500 17 32.500 17H9Q7.500 17 6.500 15L1 2.500Q.5 .5 3 .5Z" fill="#d2d2d2" stroke="#a5a5a5" /></svg>
        <div className="ml-auto mr-[6px] mt-[2px] w-[51px] h-[17px] rounded-b-[4px] border border-t-0 border-[#999] bg-[#c8c8c8] text-center text-[11px] leading-[16px] text-white [text-shadow:0_0_1px_#333,1px_0_1px_#333,-1px_0_1px_#333,0_1px_1px_#333]"><Fit w={35}>Tristan</Fit></div>
      </div>
      <div className="h-[37px] bg-[#f2f2f2] flex items-center">
        <div className="w-[120px] flex items-center pl-[10px] -mt-px">
          <svg width="16" height="16" fill="none" stroke="#5a5a5a" strokeWidth="2"><path d="M15.500 8H2.500M8.500 1.500L2 8L8.500 14.500" /></svg>
          <svg width="16" height="16" className="ml-[12px]" fill="none" stroke="#d3d3d3" strokeWidth="2"><path d="M.5 8H13.500M7.500 1.500L14 8L7.500 14.500" /></svg>
          <svg width="16" height="16" className="ml-[12px]" fill="none" stroke="#5a5a5a" strokeWidth="2"><path d="M13.500 10A6 6 0 1 1 12.500 4L14 5.500" /><path d="M15 1V7H9Z" fill="#5a5a5a" stroke="none" /></svg>
          <svg width="17" height="17" className="ml-[12px]" fill="none" stroke="#5a5a5a" strokeWidth="1.800"><path d="M1.500 9L8.500 1.800L15.500 9H13.200V15.500H3.800V9Z" /></svg>
        </div>
        <div className="w-[1099px] h-7 -mt-px rounded-[3px] border border-[#a8a8a8] bg-white flex items-center text-[14px] leading-[24px] text-[#777]">
          <svg width="9" height="13" className="ml-[10px]"><rect y="5" width="9" height="7.500" rx=".8" fill="#0b8043" /><path d="M2 5V3.500A2.500 2.500 0 0 1 7 3.500V5" fill="none" stroke="#0b8043" strokeWidth="1.400" /></svg>
          <div className="ml-[9px] text-[#0b8043]"><Fit w={43}>Secure</Fit></div>
          <div className="w-px h-4 bg-[#aaa] ml-[8px] mr-[8px]" />
          <Fit w={34} className="text-[#0b8043]">https</Fit><Fit w={13}>://</Fit><Fit w={125} className="text-black">uva.onlinejudge.org</Fit>
          <Fit w={610}>/index.php?option=com_onlinejudge&amp;Itemid=8&amp;page=problem_stats&amp;problemid=47&amp;category=</Fit>
          <svg width="14" height="14" className="ml-auto" fill="none" stroke="#555" strokeWidth="1.400"><circle cx="5.500" cy="5.500" r="4.600" /><path d="M9 9L13.500 13.500" strokeWidth="1.900" /><path d="M3.500 5.500H7.500M5.500 3.500V7.500" strokeWidth="1" /></svg>
          <svg width="15" height="15" viewBox="0 0 24 24" className="ml-[8px] mr-[6px]" fill="none" stroke="#555" strokeWidth="2"><path d="M12 2L14.800 9.200L22.500 9.600L16.500 14.500L18.500 22L12 17.800L5.500 22L7.500 14.500L1.500 9.600L9.200 9.200Z" /></svg>
        </div>
        <div className="flex-1 flex items-center pl-[10px] -mt-px">
          <div className="relative"><svg width="16" height="16"><path d="M5 0H11L16 5V11L11 16H5L0 11V5Z" fill="#df1f26" /><path d="M5 5V9L3.500 7.500L3 8.500L6 13H11L12.500 9V4H11.200V7.500V2.500H10V7.500V1.800H8.500V7.500V2.500H7V7.500Z" fill="#fff" /></svg>
            <div className="absolute left-[11px] top-[11px] w-[11px] h-[11px] rounded-[1px] bg-[#646464] text-white text-[9px] leading-[11px] text-center">1</div></div>
          <svg width="13" height="13" className="ml-[18px]" fill="none" stroke="#c4c4c4"><rect x=".8" y=".8" width="11.400" height="11.400" strokeWidth="1.600" /><path d="M3 4.500H10M3 8H6M8 7.500H10V9.500H8Z" strokeWidth="1.400" /></svg>
          <svg width="15" height="15" className="ml-[18px]"><path d="M0 0H15V10L10 15H0Z" fill="#5b5b5b" /><path d="M10 15V10H15Z" fill="#a8a8a8" /><circle cx="7.500" cy="6" r="3.200" fill="none" stroke="#fff" strokeWidth="1.600" /><path d="M6.200 8.500H8.800V12H6.200Z" fill="#fff" /></svg>
          <div className="ml-[16px] size-4 rounded-full bg-[#14b5a9] text-white text-[11px] leading-[13px] text-center">m</div>
          <svg width="4" height="14" className="ml-[22px]" fill="#5a5a5a"><circle cx="2" cy="2" r="1.500" /><circle cx="2" cy="7" r="1.500" /><circle cx="2" cy="12" r="1.500" /></svg>
        </div>
      </div>
      <div className="h-[24px] bg-[#f2f2f2] border-b border-[#b5b5b5] flex items-center pl-[10px] pb-1 text-[12px] leading-4 text-black">
        <Bm box="w-[57px]" w={24} text="Apps" icon={<svg width="14" height="14"><path d="M0 0H3V3H0ZM5 0H8V3H5ZM10 0H13V3H10Z" fill="#d94a3d" /><path d="M0 5H3V8H0ZM0 10H3V13H0Z" fill="#1e9e55" /><path d="M5 5H8V8H5Z" fill="#3f7de8" /><path d="M5 10H8V13H5ZM10 5H13V8H10ZM10 10H13V13H10Z" fill="#f2b31c" /></svg>} />
        <Bm box="w-[60px]" w={27} text="gmail" icon={<svg width="14" height="12"><rect width="14" height="11" y=".5" rx="1" fill="#f4f0ee" /><path d="M1 11.500V1.500L7 6.500L13 1.500V11.500" fill="none" stroke="#d9453a" strokeWidth="2" /></svg>} />
        <Bm box="w-[77px]" w={44} text="Duolingo" icon={<svg width="16" height="12"><path d="M0 1Q4 2 8 1.500Q12 2 16 1Q16 11 8 11Q0 11 0 1Z" fill="#79c51c" /><circle cx="5" cy="5.500" r="3" fill="#e9f7c9" /><circle cx="11" cy="5.500" r="3" fill="#e9f7c9" /><circle cx="5.500" cy="5.500" r="1.300" fill="#333" /><circle cx="10.500" cy="5.500" r="1.300" fill="#333" /><path d="M7 7H9L8 10Z" fill="#f0932b" /></svg>} />
        <Bm box="w-[150px]" w={116} fade text="First-Year Hindi Textboo" icon={<svg width="16" height="16"><path d="M6 0L9 5L7 8L4 5Z" fill="#d8262c" /><path d="M10 6L15 4L13 9L9 8Z" fill="#edb21b" /><path d="M8 8L13 10L14 15L9 12Z" fill="#3fa648" /><path d="M7 8L7 12L3 15L4 10Z" fill="#2d6fd2" /><path d="M0 5L6 6L7 8L2 9Z" fill="#7b3fa8" /></svg>} />
        <Bm box="w-[57px]" w={24} text="CIBC" icon={<svg width="16" height="16"><rect width="16" height="16" fill="#a3121f" /><text x="1" y="7" fontSize="6.500" fontWeight="700" fontFamily="Liberation Serif" fill="#f8a51b" textLength="14">CIBC</text><path d="M0 13Q8 8 16 9.500" stroke="#f8a51b" fill="none" strokeWidth="1.500" /></svg>} />
        <Bm box="w-[88px]" w={55} text="Bookmarks" icon={<svg width="15" height="14" viewBox="1 1.500 22 21"><path d="M12 2L14.800 9.200L22.500 9.600L16.500 14.500L18.500 22L12 17.800L5.500 22L7.500 14.500L1.500 9.600L9.200 9.200Z" fill="#555" /></svg>} />
        <Bm box="w-[91px]" w={58} text="Bear Tracks" icon={<svg width="12" height="15" className="ml-[2px]"><path d="M1 1H7L10.500 4.500V13.500H1ZM6.500 1V5H10.500" fill="#fafafa" stroke="#5b5b5b" strokeWidth="1.300" /></svg>} />
        <Bm box="w-[65px]" w={32} text="eClass" icon={<svg width="16" height="16"><path d="M13.500 11.500Q11 15 7.500 13.500Q4 11 5.500 7.500Q8 4 11.500 5.500Q13.500 7.500 12 9Q9 10.500 6 10" fill="none" stroke="#ea8a1c" strokeWidth="2.200" /><path d="M0 3L6 .5L10 2L5 5ZM1 4V8L3 7V5Z" fill="#4c4c4c" /></svg>} />
        <Bm box="w-[150px]" w={119} fade text="An Introduction To The S" icon={<svg width="16" height="16"><rect width="16" height="16" fill="#6d9a8a" /><text x="0" y="7.500" fontSize="8" fontWeight="800" fontFamily="Open Sans" textLength="16" lengthAdjust="spacingAndGlyphs">SQL</text><text x="1" y="15" fontSize="8" fontWeight="800" fontFamily="Open Sans" textLength="14" lengthAdjust="spacingAndGlyphs">-ite</text></svg>} />
        <Bm box="w-[150px]" w={116} fade text="Shaktimaan Episode 1 -" icon={<svg width="16" height="12"><rect width="16" height="12" rx="2.500" fill="#d9252a" /><path d="M6 3.500V8.500L10.500 6Z" fill="#fff" /></svg>} />
        <Bm box="w-[150px]" w={116} fade text="27 Comfort Foods That " icon={<svg width="16" height="16"><circle cx="8" cy="8" r="8" fill="#e8312a" /><path d="M3.500 11.500L6.500 7.500L9 9.500L11.500 5.500" fill="none" stroke="#fff" strokeWidth="2.200" /><path d="M8.500 4.500H13V9Z" fill="#fff" /></svg>} />
        <svg width="9" height="8" className="ml-[128px]" fill="none" stroke="#555" strokeWidth="1.600"><path d="M1 .8L4 4L1 7.200M5 .8L8 4L5 7.200" /></svg>
        <div className="ml-[9px] mr-[11px] w-px h-4 bg-[#bbb]" />
        <Bm box="w-[110px]" w={86} text="Other bookmarks" icon={<svg width="15" height="12"><path d="M0 1Q0 0 1 0H5L6.500 1.800H13Q14.200 1.800 14.200 3V10.500Q14.200 11.800 13 11.800H1Q0 11.800 0 10.500Z" fill="#555" /></svg>} />
      </div>
    </div>
  );
}

/* ---------- judge page ---------- */
type Slice = { label: string; v: number; pie: string; key: string };
const verdicts: Slice[] = [
  { label: "AC", v: 12853, pie: "#3b5d7e", key: "#5f7b95" },
  { label: "PE", v: 52, pie: "#55779a", key: "#738fa9" },
  { label: "WA", v: 9168, pie: "#6c90b1", key: "#87a3bd" },
  { label: "ML", v: 9, pie: "#86a9ca", key: "#9bb6d0" },
  { label: "TL", v: 1946, pie: "#9dc0e2", key: "#afcbe5" },
  { label: "RE", v: 1504, pie: "#b8dafb", key: "#c4dff9" },
  { label: "CE", v: 3891, pie: "#d1f3ff", key: "#d7f4ff" },
  { label: "SE", v: 152, pie: "#eaffff", key: "#ecffff" },
];
const langs: Slice[] = [
  { label: "ANSI C", v: 5366, pie: "#843335", key: "#9a5a5b" },
  { label: "JAVA", v: 2280, pie: "#9d4d4f", key: "#ae6d6f" },
  { label: "C++", v: 18192, pie: "#b76668", key: "#c28182" },
  { label: "PASCAL", v: 1392, pie: "#d07f80", key: "#d69798" },
  { label: "C++11", v: 2337, pie: "#ea9899", key: "#ebaaab" },
  { label: "PYTH3", v: 18, pie: "#ffb2b3", key: "#fdbdbe" },
];

function Pie({ data }: { data: Slice[] }) {
  const total = data.reduce((s, d) => s + d.v, 0);
  const cx = 130, cy = 129.5, r = 103;
  let a = 0;
  const at = (t: number) => `${cx + r * Math.sin(t)} ${cy - r * Math.cos(t)}`;
  return (
    <div className="relative w-[297px] h-[258px] bg-[#f5f5f5]">
      <svg width="297" height="258">
        <circle cx={cx + 1.2} cy={cy + 2} r={r + 1.2} fill="#cccccc" />
        {data.map((d) => {
          const b = a + (d.v / total) * Math.PI * 2;
          const p = `M${cx} ${cy}L${at(a)}A${r} ${r} 0 ${b - a > Math.PI ? 1 : 0} 1 ${at(b)}Z`;
          a = b;
          return <path key={d.label} d={p} fill={d.pie} stroke="#fff" strokeWidth="2.4" strokeLinejoin="bevel" />;
        })}
      </svg>
      <div className="absolute left-[263px] top-[5px] w-[104px] border border-black/85 bg-white/90 pt-[2px] pb-px font-['Liberation_Serif',serif] text-[10.200px] text-[#6b6b6b]">
        {data.map((d) => (
          <div key={d.label} className="flex items-center h-[17px] pl-[2px] leading-[17px]">
            <svg width="15" height="15" className="mr-[2.500px]"><rect x=".5" y=".5" width="14" height="14" fill={d.key} stroke="#222" /></svg>
            {d.label} ({d.v})
          </div>
        ))}
      </div>
    </div>
  );
}

const menu1 = ["Home", "My Account", "Contact Us", "ACM-ICPC Live Archive", "Logout"];
const menu2 = ["Quick Submit", "Migrate submissions", "My Submissions", "My Statistics", "My uHunt with Virtual Contest Service", "Browse Problems", "Quick access, info and search", "Problemsetters' Credits", "Live Rankings", "Site Statistics", "Contests", "Electronic Board", "Additional Information"];
const rows = [
  ["1", "403556", "Josh Metzler", "0.000", "ANSI C", "2001-03-07 20:59:57"],
  ["2", "643929", "Joe Lindstr", "0.000", "C++", "2001-11-08 20:36:00"],
  ["3", "783037", "Royce Ching", "0.000", "ANSI C", "2002-03-14 16:12:45"],
  ["4", "808530", "Kenny McCormick", "0.000", "ANSI C", "2002-04-04 01:41:30"],
  ["5", "2095985", "Andrian Kurniady", "0.000", "PASCAL", "2003-11-22 15:47:40"],
  ["6", "5900872", "Ben Hachimori", "0.000", "C++", "2007-09-07 15:04:00"],
  ["7", "5910793", "Victor Armengol", "0.000", "C++", "2007-09-10 22:25:59"],
];
const cols = "grid grid-cols-[99px_137px_310px_112px_116px_216px] text-center";

function JudgePage() {
  return (
    <div className="flex-1 min-h-0 flex bg-[#9a98a9] overflow-hidden font-['Liberation_Sans',Arial,sans-serif]">
      <div className="w-[1320px] ml-[24px] mt-3 h-[800px] shrink-0 border border-[#666475] border-b-0 bg-white">
        <div className="relative h-[156px]">
          <div className="h-[88px] bg-[linear-gradient(180deg,#938989,#534a4c)]" />
          <div className="h-[68px] bg-[#2e2e2e]" />
          <div className="absolute left-[22px] top-[88px] w-[165px] h-[53px] bg-[#323132]" />
          <div className="absolute left-[75px] top-[23px] w-[61px] h-[60px] bg-[#bb1555] text-white font-bold text-[20px] leading-[24px] pt-[19px] pl-[11px] font-['Roboto',sans-serif]"><Fit w={38}>UVa</Fit></div>
          <div className="absolute left-[25px] top-[87px] text-white text-[41px] leading-[48px] font-light font-['Roboto',sans-serif]"><Fit w={158} squeeze>Online Judge</Fit></div>
        </div>
        <div className="h-5 border-b border-[#e5e5e5] flex items-center pl-3 pt-[5px] text-[12px] text-[#2c2c48] leading-[14px]">
          <Fit w={32}>Home</Fit>
          <svg width="5" height="8" className="ml-[6px] mr-[6px]"><path d="M0 0L5 4L0 8Z" fill="#bbb" /></svg>
          <Fit w={94} className="text-[#858585]">Browse Problems</Fit>
        </div>
        <div className="flex pl-[15px] pt-[15px] text-[15px] text-[#444]">
          <div className="w-[267px]">
            <div className="flex h-6">
              <div className="w-[188px] border border-[#c9c9c9] flex items-center pl-[3px] text-[#a5a5a5] leading-5">
                <span className="font-['Liberation_Serif',serif] text-[16px]"><Fit w={42}>Google</Fit></span><span className="text-[6px] -mt-2 w-[10px]">TM</span><span className="text-[10px] text-[#999] font-['DejaVu_Sans',sans-serif]"><Fit w={76}>Custom Search</Fit></span>
              </div>
              <div className="ml-1 w-[57px] border border-[#c9c9c9] bg-[#f9f9f9] text-[#737373] pl-[4px] leading-[22px]"><Fit w={48}>Search</Fit></div>
            </div>
            <div className="mt-[39px] h-6 leading-6 text-[18px] font-bold text-[#000066] whitespace-nowrap"><Fit w={93}>Main Menu</Fit></div>
            <div className="mt-1 border-t border-[#ebebeb]">
              {menu1.map((m) => <div key={m} className="h-6 border-b border-[#ebebeb] leading-[22px] pl-[11px]">{m}</div>)}
            </div>
            <div className="mt-[37.500px] h-6 leading-6 text-[18px] font-bold text-[#000066] whitespace-nowrap"><Fit w={114}>Online Judge</Fit></div>
            <div className="mt-[4.500px] border-t border-[#ebebeb]">
              {menu2.map((m) => (
                <div key={m} className={"h-6 border-b-2 border-[#ebebeb] leading-[22px] pl-[11px] whitespace-nowrap " + (m === "Browse Problems" ? "bg-[#aba9ba] text-white font-bold" : "")}>{m}</div>
              ))}
            </div>
          </div>
          <div className="ml-[15px] w-[16px] h-[700px] border-l-2 border-dotted border-[#d9d9d9]" />
          <div className="w-[990px]">
            <div className="leading-[15px] text-[#880000]">Root</div>
            <div className="mt-[22px] h-[30px] leading-[30px] text-[24px] text-[#000066]"><Fit w={219}>111 - History Grading</Fit></div>
            <div className="mt-[11px] flex">
              <div className="w-[495px] pl-[83px]"><Pie data={verdicts} /></div>
              <div className="w-[495px] pl-[83px]"><Pie data={langs} /></div>
            </div>
            <div className="mt-[18px] grid grid-cols-3 text-center">
              {["Total Submissions", "Users that tried it", "Users that solved it"].map((t) => <div key={t} className="h-4 leading-4 bg-[#ccc] font-bold">{t}</div>)}
              {["29585", "11557", "8805"].map((t) => <div key={t} className="h-[21px] leading-5 bg-[#f2f2f2] border-b border-[#e2e2e2]">{t}</div>)}
            </div>
            <div className="mt-2 bg-[#ccc] font-bold">
              <div className="h-6 leading-[24px] text-center">Top 20</div>
              <div className={"h-6 leading-[24px] " + cols}>
                {["Ranking", "Submission", "User", "Run Time", "Language", "Submission Date"].map((h) => <div key={h}>{h}</div>)}
              </div>
            </div>
            {rows.map((r, i) => (
              <div key={r[0]} className={cols + (i % 2 ? " h-[22px] leading-[22px] bg-[#e9e9e9]" : " h-5 leading-5 bg-[#f3f3f3]")}>
                {r.map((c, j) => <div key={j} className={j === 2 ? "text-[#880000]" : ""}>{c}</div>)}
              </div>
            ))}
          </div>
        </div>
      </div>
      <div className="ml-auto w-[15px] shrink-0 bg-[#f1f1f1] flex flex-col items-center">
        <div className="h-[15px] flex items-center"><svg width="8" height="5"><path d="M0 5H8L4 0Z" fill="#a3a3a3" /></svg></div>
        <div className="w-[11px] h-[395px] bg-[#c1c1c1]" />
        <div className="flex-1" />
        <div className="h-[15px] flex items-center"><svg width="8" height="5"><path d="M0 0H8L4 5Z" fill="#505050" /></svg></div>
      </div>
    </div>
  );
}

function BottomWindow() {
  return (
    <div className="h-[900px] flex flex-col overflow-hidden">
      <div className="relative h-[21px] shrink-0 bg-[linear-gradient(180deg,#5c5a51,#43423d)] flex items-center pr-[7px]">
        <div className="absolute left-[65px] top-0 h-[21px] flex items-center text-[12.500px] leading-[21px] text-[#77746a]">
          <Fit w={22}>File</Fit><Fit w={22} className="ml-[13px]">Edit</Fit><Fit w={27} className="ml-[13px]">View</Fit><Fit w={44} className="ml-[13px]">History</Fit><Fit w={32} className="ml-[9px]">Tools</Fit><Fit w={42} className="ml-[9px]">People</Fit><Fit w={28} className="ml-[10px]">Help</Fit>
        </div>
        <div className="relative pl-[6px] text-[12.500px] font-bold text-[#d6d2c8] leading-[21px] [mask-image:linear-gradient(90deg,#000_30%,rgba(0,0,0,.8)_45%)]"><Fit w={222}>UVa Online Judge - Google Chrome</Fit></div>
        <Chrome className="size-[17px] ml-auto" />
        <Wifi className="w-[17px] h-3 ml-[11px]" />
        <div className="ml-[11px] w-[17px] h-[17px] rounded-[2px] bg-[#dfdbd2] text-[#3c3b37] text-[10px] leading-[17px] text-center">En</div>
        <Volume className="w-[17px] h-[14px] ml-[11px]" />
        <div className="ml-[14px] text-[12.500px] leading-[21px] text-[#dfdbd2]"><Fit w={47}>5:21 AM</Fit></div>
        <Gear className="size-[14px] ml-[11px]" />
      </div>
      <div className="flex-1 min-h-0 flex">
        <Launcher small pips={{ terminal: "solid", sublime: "solid", chrome: "bars", line: "open", evince: "open", camera: "solid" }} />
        <div className="flex-1 min-w-0 flex flex-col">
          <BrowserBars />
          <JudgePage />
        </div>
      </div>
    </div>
  );
}

export default function App() {
  return (
    <div className={"w-[1440px] h-[1800px] overflow-hidden bg-white " + UI}>
      <TopWindow />
      <BottomWindow />
    </div>
  );
}
